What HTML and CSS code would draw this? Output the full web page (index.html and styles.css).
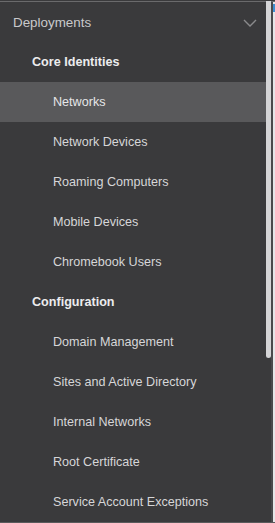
FILE: index.html
```html
<!DOCTYPE html>
<html>
<head>
<meta charset="utf-8">
<link rel="stylesheet" href="styles.css">
</head>
<body>
<div class="frame">
  <nav class="nav">
    <div class="row top">
      <span>Deployments</span>
      <svg class="chev" width="14" height="8" viewBox="0 0 14 8"><path d="M1 1 L7 7 L13 1" fill="none" stroke="#8a8a8c" stroke-width="1.4"/></svg>
    </div>
    <div class="row head">Core Identities</div>
    <div class="row item active">Networks</div>
    <div class="row item">Network Devices</div>
    <div class="row item">Roaming Computers</div>
    <div class="row item">Mobile Devices</div>
    <div class="row item">Chromebook Users</div>
    <div class="row head">Configuration</div>
    <div class="row item">Domain Management</div>
    <div class="row item">Sites and Active Directory</div>
    <div class="row item">Internal Networks</div>
    <div class="row item">Root Certificate</div>
    <div class="row item">Service Account Exceptions</div>
  </nav>
  <div class="track"><div class="thumb"></div></div>
  <div class="gap"></div>
  <div class="edge"><div class="blue"></div></div>
</div>
</body>
</html>
```
FILE: styles.css
```css
html, body {
  margin: 0;
  padding: 0;
  background: #3a3a3c;
  height: 523px;
  overflow: hidden;
}
body {
  padding-top: 1px;
  box-sizing: border-box;
}
.frame {
  display: flex;
  height: 522px;
  border-top: 1px solid #6a6a6c;
  box-sizing: border-box;
  border-bottom: 1px solid #5a5a5c;
}
.nav {
  width: 266px;
  flex: none;
  font-family: "Liberation Sans", Arial, sans-serif;
  font-size: 12.6px;
}
.row {
  height: 40px;
  display: flex;
  align-items: center;
  box-sizing: border-box;
}
.top {
  padding-left: 13px;
  padding-right: 9px;
  justify-content: space-between;
  color: #c9c9cb;
  font-size: 13.4px;
}
.chev { margin-top: 1px; }
.head {
  padding-left: 32px;
  color: #ececee;
  font-weight: bold;
}
.item {
  padding-left: 53px;
  color: #d6d6d8;
}
.item.active {
  background: #59595b;
  color: #e6e6e8;
}
.track {
  width: 5px;
  flex: none;
}
.thumb {
  height: 357px;
  background: #d4d4d6;
  border-radius: 0 0 3px 3px;
  margin-top: -1px;
}
.gap {
  width: 2px;
  flex: none;
  background: #4a4a4c;
}
.edge {
  flex: 1;
  background: #e6e6e8;
}
.blue {
  margin-top: 2px;
  height: 8px;
  background: #3f8fd2;
}
```
